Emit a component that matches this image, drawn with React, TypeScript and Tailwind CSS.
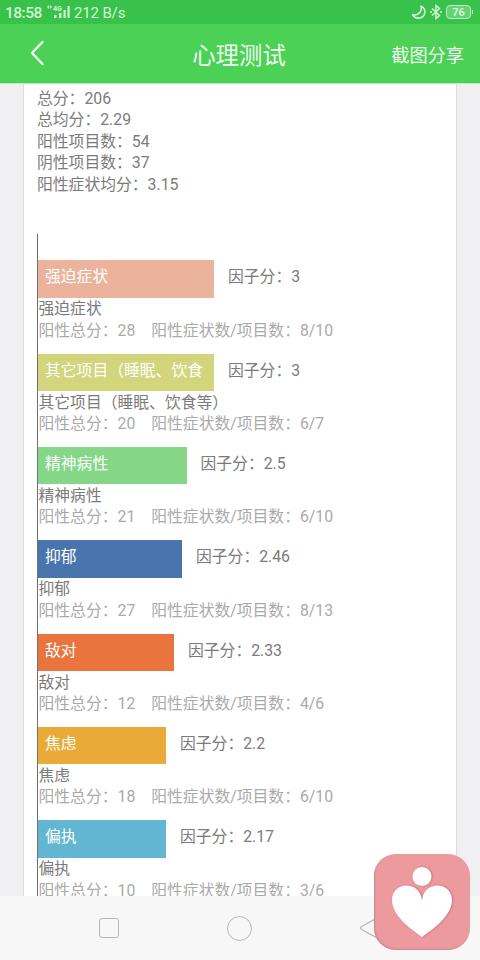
interface Factor {
  name: string
  label?: string
  score: string
  total: number
  ratio: string
  width: number
  color: string
}

const summary = [
  ['总分', '206'],
  ['总均分', '2.29'],
  ['阳性项目数', '54'],
  ['阴性项目数', '37'],
  ['阳性症状均分', '3.15'],
]

const factors: Factor[] = [
  { name: '强迫症状', score: '3', total: 28, ratio: '8/10', width: 176, color: 'bg-[#ebb39b]' },
  { name: '其它项目（睡眠、饮食等）', label: '其它项目（睡眠、饮食', score: '3', total: 20, ratio: '6/7', width: 176, color: 'bg-[#d3d57d]' },
  { name: '精神病性', score: '2.5', total: 21, ratio: '6/10', width: 148.5, color: 'bg-[#85d787]' },
  { name: '抑郁', score: '2.46', total: 27, ratio: '8/13', width: 144, color: 'bg-[#4a74ad]' },
  { name: '敌对', score: '2.33', total: 12, ratio: '4/6', width: 136, color: 'bg-[#e9743e]' },
  { name: '焦虑', score: '2.2', total: 18, ratio: '6/10', width: 128, color: 'bg-[#eaaa38]' },
  { name: '偏执', score: '2.17', total: 10, ratio: '3/6', width: 128, color: 'bg-[#62b6d2]' },
]

function StatusBar() {
  return (
    <div className="flex h-6 shrink-0 items-center bg-[#38c24b] pl-[5px] pr-[7px] text-[#d3f7d6]">
      <span className="w-[41px] pt-px text-[15.5px] font-medium leading-6 tracking-[-0.5px]">18:58</span>
      <svg className="h-5 w-6" viewBox="0 0 24 20" fill="currentColor">
        <path d="M1 5l2-2v4zM6 5L4 3v4z" />
        <text x="7" y="8.5" fontSize="7" fontWeight="700">4G</text>
        <rect x="8" y="13" width="2.5" height="3" />
        <rect x="13" y="11" width="2.5" height="5" />
        <rect x="17.500" y="8" width="2.2" height="8" />
        <rect x="21.500" y="4" width="2.2" height="12" />
      </svg>
      <span className="ml-[4px] pt-px text-[15px] leading-6 tracking-[-0.15px]">212 B/s</span>
      <div className="ml-auto flex items-center">
        <svg className="h-4 w-4" viewBox="0 0 16 16" fill="none" stroke="currentColor" strokeWidth="1.6" strokeLinejoin="round">
          <path d="M10 2.300C16 5 14.500 12.800 9 14c-3.300.6-6-.8-7.300-3.300C6.500 12 11.500 8 10 2.300z" />
        </svg>
        <svg className="ml-[2px] h-4 w-[14px]" viewBox="0 0 14 16" fill="none" stroke="currentColor" strokeWidth="1.5">
          <path d="M3 4.500l7.500 7-3.500 3V1.500l3.500 3-7.500 7M1 8h2M11 8h2" />
        </svg>
        <div className="ml-[3px] flex h-[14px] w-[25px] items-center justify-center rounded-[4px] border border-[#b9efbd] bg-[#65d273] text-[11px] font-bold leading-none">76</div>
        <div className="ml-px h-1 w-px bg-[#b9efbd]" />
      </div>
    </div>
  )
}

function Header() {
  return (
    <header className="grid h-[60px] shrink-0 grid-cols-[1fr_auto_1fr] items-center border-b border-[#b5edba] bg-[#4ad156] pl-[14px] pr-[16px] text-[#effcef]">
      <svg className="ml-4 h-[27px] w-[15px]" viewBox="0 0 15 26" fill="none" stroke="currentColor" strokeWidth="2.500" strokeLinecap="round" strokeLinejoin="round">
        <path d="M12.500 1.500L2 12.500l10.500 11" />
      </svg>
      <h1 className="pt-[5px] text-[23.4px] leading-[54px]">心理测试</h1>
      <span className="pt-[4px] text-right text-[18.2px] leading-[55px]">截图分享</span>
    </header>
  )
}

function FactorRow({ factor }: { factor: Factor }) {
  return (
    <div className="h-[93.3px]">
      <div className="flex h-[37.3px] items-center">
        <div
          className={`flex h-full items-center overflow-hidden whitespace-nowrap pb-[4px] pl-[7px] text-white ${factor.color}`}
          style={{ width: factor.width }}
        >
          {factor.label ?? factor.name}
        </div>
        <span className="pb-[4px] pl-[14px]">因子分：{factor.score}</span>
      </div>
      <p className="pl-[0.5px] pt-[0.6px]">{factor.name}</p>
      <p className="flex gap-4 pl-[0.5px] text-[#aaaaaa]">
        <span>阳性总分：{factor.total}</span>
        <span>阳性症状数/项目数：{factor.ratio}</span>
      </p>
    </div>
  )
}

export default function App() {
  return (
    <div className="relative flex h-[960px] w-[480px] flex-col overflow-hidden bg-[#f0f0f3] font-['Roboto','Noto_Sans_CJK_SC',sans-serif]">
      <StatusBar />
      <Header />
      <main className="ml-[23px] mr-[23px] min-h-0 flex-1 overflow-hidden border-x border-[#dddde0] bg-white pl-[13px] pt-[4px] text-[15.8px] leading-[21.4px] text-[#7b7b7b]">
        {summary.map(([label, value]) => (
          <p key={label}>{label}：{value}</p>
        ))}
        <div className="mt-[39px] border-l border-[#707070] pt-[26.400px]">
          {factors.map(f => <FactorRow key={f.name} factor={f} />)}
        </div>
      </main>

      <nav className="flex h-16 shrink-0 items-center bg-[#f7f7f7] pl-[99px] text-[#b5b5b5]">
        <div className="h-5 w-5 rounded-[3px] border-[1.5px] border-current" />
        <div className="ml-[108px] h-[25px] w-[25px] rounded-full border-[1.5px] border-current" />
        <svg className="ml-[107px] h-6 w-6" viewBox="0 0 24 24" fill="none" stroke="currentColor" strokeWidth="1.300" strokeLinejoin="round">
          <path d="M20 1L2.500 10.500q-2 1.500 0 3L20 23z" />
        </svg>
      </nav>

      {/* floating app badge */}
      <div className="absolute left-[374px] top-[854px] h-24 w-24 rounded-[22px] bg-[#ed9a9f] shadow-[inset_1px_-1px_2px_#c9878b]">
        <svg className="h-full w-full drop-shadow-[1px_0_1px_#b9777c]" viewBox="0 0 96 96" fill="white">
          <circle cx="48" cy="22.500" r="9.500" />
          <path d="M48 83C40 77 18 63 18 46c0-8 6-14.500 14-14.500 8 0 15 5 16 15 1-10 8-15 16-15 8 0 14 6.500 14 14.500 0 17-22 31-30 37z" />
        </svg>
      </div>
    </div>
  )
}
